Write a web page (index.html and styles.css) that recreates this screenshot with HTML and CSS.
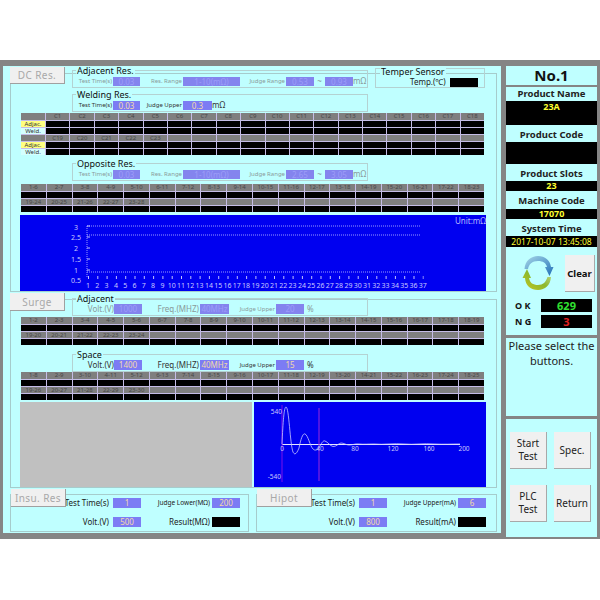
FILE: index.html
```html
<!DOCTYPE html>
<html lang="en">
<head>
<meta charset="utf-8">
<title>No.1</title>
<link rel="stylesheet" href="styles.css">
</head>
<body>
<div class="app">
  <main class="left">
    <section class="sec sec-dc">
      <button class="tab tab-dc">DC Res.</button>
      <div class="row-top">
        <div class="group off">
          <span class="gtitle">Adjacent Res.</span>
          <span class="l w35">Test Time(s)</span><span class="val w27">0.03</span>
          <span class="l w43">Res. Range</span><span class="val w57">1-10(mΩ)</span>
          <span class="l w46">Judge Range</span><span class="val w28">0.53</span>
          <span class="tilde">~</span><span class="val w28">0.93</span><span class="unit">mΩ</span>
        </div>
        <div class="group temper">
          <span class="gtitle">Temper Sensor</span>
          <span class="temp-l">Temp.(℃)</span><span class="black-box"></span>
        </div>
      </div>
      <div class="group weld">
        <span class="gtitle">Welding Res.</span>
        <span class="l w35">Test Time(s)</span><span class="val w27">0.03</span>
        <span class="l w43">Judge Upper</span><span class="val w29">0.3</span><span class="unit">mΩ</span>
      </div>
      <div class="table t-six">
        <span class="h"></span><span class="h">C1</span><span class="h">C2</span><span class="h">C3</span><span class="h">C4</span><span class="h">C5</span><span class="h">C6</span><span class="h">C7</span><span class="h">C8</span><span class="h">C9</span><span class="h">C10</span><span class="h">C11</span><span class="h">C12</span><span class="h">C13</span><span class="h">C14</span><span class="h">C15</span><span class="h">C16</span><span class="h">C17</span><span class="h">C18</span>
        <span class="adj">Adjac.</span><span class="k"></span><span class="k"></span><span class="k"></span><span class="k"></span><span class="k"></span><span class="k"></span><span class="k"></span><span class="k"></span><span class="k"></span><span class="k"></span><span class="k"></span><span class="k"></span><span class="k"></span><span class="k"></span><span class="k"></span><span class="k"></span><span class="k"></span><span class="k"></span>
        <span class="wld">Weld.</span><span class="k"></span><span class="k"></span><span class="k"></span><span class="k"></span><span class="k"></span><span class="k"></span><span class="k"></span><span class="k"></span><span class="k"></span><span class="k"></span><span class="k"></span><span class="k"></span><span class="k"></span><span class="k"></span><span class="k"></span><span class="k"></span><span class="k"></span><span class="k"></span>
        <span class="h"></span><span class="h">C19</span><span class="h">C20</span><span class="h">C21</span><span class="h">C22</span><span class="h">C23</span><span class="h"></span><span class="h"></span><span class="h"></span><span class="h"></span><span class="h"></span><span class="h"></span><span class="h"></span><span class="h"></span><span class="h"></span><span class="h"></span><span class="h"></span><span class="h"></span><span class="h"></span>
        <span class="adj">Adjac.</span><span class="k"></span><span class="k"></span><span class="k"></span><span class="k"></span><span class="k"></span><span class="k"></span><span class="k"></span><span class="k"></span><span class="k"></span><span class="k"></span><span class="k"></span><span class="k"></span><span class="k"></span><span class="k"></span><span class="k"></span><span class="k"></span><span class="k"></span><span class="k"></span>
        <span class="wld">Weld.</span><span class="k"></span><span class="k"></span><span class="k"></span><span class="k"></span><span class="k"></span><span class="k"></span><span class="k"></span><span class="k"></span><span class="k"></span><span class="k"></span><span class="k"></span><span class="k"></span><span class="k"></span><span class="k"></span><span class="k"></span><span class="k"></span><span class="k"></span><span class="k"></span>
      </div>
      <div class="group off opp">
        <span class="gtitle">Opposite Res.</span>
        <span class="l w35">Test Time(s)</span><span class="val w27">0.03</span>
        <span class="l w43">Res. Range</span><span class="val w57">1-10(mΩ)</span>
        <span class="l w46">Judge Range</span><span class="val w28">2.65</span>
        <span class="tilde">~</span><span class="val w28">3.05</span><span class="unit">mΩ</span>
      </div>
      <div class="table t-four t-opp">
        <span class="h">1-6</span><span class="h">2-7</span><span class="h">3-8</span><span class="h">4-9</span><span class="h">5-10</span><span class="h">6-11</span><span class="h">7-12</span><span class="h">8-13</span><span class="h">9-14</span><span class="h">10-15</span><span class="h">11-16</span><span class="h">12-17</span><span class="h">13-18</span><span class="h">14-19</span><span class="h">15-20</span><span class="h">16-21</span><span class="h">17-22</span><span class="h">18-23</span>
        <span class="k"></span><span class="k"></span><span class="k"></span><span class="k"></span><span class="k"></span><span class="k"></span><span class="k"></span><span class="k"></span><span class="k"></span><span class="k"></span><span class="k"></span><span class="k"></span><span class="k"></span><span class="k"></span><span class="k"></span><span class="k"></span><span class="k"></span><span class="k"></span>
        <span class="h">19-24</span><span class="h">20-25</span><span class="h">21-26</span><span class="h">22-27</span><span class="h">23-28</span><span class="h"></span><span class="h"></span><span class="h"></span><span class="h"></span><span class="h"></span><span class="h"></span><span class="h"></span><span class="h"></span><span class="h"></span><span class="h"></span><span class="h"></span><span class="h"></span><span class="h"></span>
        <span class="k"></span><span class="k"></span><span class="k"></span><span class="k"></span><span class="k"></span><span class="k"></span><span class="k"></span><span class="k"></span><span class="k"></span><span class="k"></span><span class="k"></span><span class="k"></span><span class="k"></span><span class="k"></span><span class="k"></span><span class="k"></span><span class="k"></span><span class="k"></span>
      </div>
      <div class="chart-main">
        <svg class="svg-fill" viewBox="0 0 466 76" width="466" height="76">
          <g class="grid-lines">
            <path d="M67 11H400M67 20H400M67 57H400M67 11V63"/>
          </g>
          <path class="ticks-x" d="M68 62.5H403.5"/>
          <path class="ticks-y" d="M67 11H70M67 22H70M67 33H70M67 44H70M67 55H70"/>
          <g class="ax-y">
            <text x="56" y="14.5">3</text><text x="56" y="25">2.5</text><text x="56" y="36">2</text><text x="56" y="47">1.5</text><text x="56" y="58">1</text><text x="56" y="68">0.5</text>
          </g>
          <g class="ax-x">
            <text x="68" y="73">1</text><text x="77.3" y="73">2</text><text x="86.6" y="73">3</text><text x="95.9" y="73">4</text><text x="105.2" y="73">5</text><text x="114.5" y="73">6</text><text x="123.8" y="73">7</text><text x="133.1" y="73">8</text><text x="142.4" y="73">9</text><text x="151.7" y="73">10</text><text x="161" y="73">11</text><text x="170.3" y="73">12</text><text x="179.6" y="73">13</text><text x="188.9" y="73">14</text><text x="198.2" y="73">15</text><text x="207.5" y="73">16</text><text x="216.8" y="73">17</text><text x="226.1" y="73">18</text><text x="235.4" y="73">19</text><text x="244.7" y="73">20</text><text x="254" y="73">21</text><text x="263.3" y="73">22</text><text x="272.6" y="73">23</text><text x="281.9" y="73">24</text><text x="291.2" y="73">25</text><text x="300.5" y="73">26</text><text x="309.8" y="73">27</text><text x="319.1" y="73">28</text><text x="328.4" y="73">29</text><text x="337.7" y="73">30</text><text x="347" y="73">31</text><text x="356.3" y="73">32</text><text x="365.6" y="73">33</text><text x="374.9" y="73">34</text><text x="384.2" y="73">35</text><text x="393.5" y="73">36</text><text x="402.8" y="73">37</text>
          </g>
          <text class="unit-text" x="466" y="9">Unit:mΩ</text>
        </svg>
      </div>
    </section>

    <section class="sec sec-surge">
      <button class="tab tab-surge">Surge</button>
      <div class="group off s-adj">
        <span class="gtitle">Adjacent</span>
        <span class="ml big w42">Volt.(V)</span><span class="val v2 w28">1000</span>
        <span class="ml big w57">Freq.(MHZ)</span><span class="val v2 w29f">40MHz</span>
        <span class="l w47">Judge Upper</span><span class="val v2 w28">20</span><span class="pct">%</span>
      </div>
      <div class="table t-four">
        <span class="h">1-2</span><span class="h">2-3</span><span class="h">3-4</span><span class="h">4-5</span><span class="h">5-6</span><span class="h">6-7</span><span class="h">7-8</span><span class="h">8-9</span><span class="h">9-10</span><span class="h">10-11</span><span class="h">11-12</span><span class="h">12-13</span><span class="h">13-14</span><span class="h">14-15</span><span class="h">15-16</span><span class="h">16-17</span><span class="h">17-18</span><span class="h">18-19</span>
        <span class="k"></span><span class="k"></span><span class="k"></span><span class="k"></span><span class="k"></span><span class="k"></span><span class="k"></span><span class="k"></span><span class="k"></span><span class="k"></span><span class="k"></span><span class="k"></span><span class="k"></span><span class="k"></span><span class="k"></span><span class="k"></span><span class="k"></span><span class="k"></span>
        <span class="h">19-20</span><span class="h">20-21</span><span class="h">21-22</span><span class="h">22-23</span><span class="h">23-24</span><span class="h"></span><span class="h"></span><span class="h"></span><span class="h"></span><span class="h"></span><span class="h"></span><span class="h"></span><span class="h"></span><span class="h"></span><span class="h"></span><span class="h"></span><span class="h"></span><span class="h"></span>
        <span class="k"></span><span class="k"></span><span class="k"></span><span class="k"></span><span class="k"></span><span class="k"></span><span class="k"></span><span class="k"></span><span class="k"></span><span class="k"></span><span class="k"></span><span class="k"></span><span class="k"></span><span class="k"></span><span class="k"></span><span class="k"></span><span class="k"></span><span class="k"></span>
      </div>
      <div class="group s-space">
        <span class="gtitle">Space</span>
        <span class="ml big w42">Volt.(V)</span><span class="val v2 w28">1400</span>
        <span class="ml big w57">Freq.(MHZ)</span><span class="val v2 w29f">40MHz</span>
        <span class="l w47">Judge Upper</span><span class="val v2 w28">15</span><span class="pct">%</span>
      </div>
      <div class="table t-four t-space">
        <span class="h">1-8</span><span class="h">2-9</span><span class="h">3-10</span><span class="h">4-11</span><span class="h">5-12</span><span class="h">6-13</span><span class="h">7-14</span><span class="h">8-15</span><span class="h">9-16</span><span class="h">10-17</span><span class="h">11-18</span><span class="h">12-19</span><span class="h">13-20</span><span class="h">14-21</span><span class="h">15-22</span><span class="h">16-23</span><span class="h">17-24</span><span class="h">18-25</span>
        <span class="k"></span><span class="k"></span><span class="k"></span><span class="k"></span><span class="k"></span><span class="k"></span><span class="k"></span><span class="k"></span><span class="k"></span><span class="k"></span><span class="k"></span><span class="k"></span><span class="k"></span><span class="k"></span><span class="k"></span><span class="k"></span><span class="k"></span><span class="k"></span>
        <span class="h">19-26</span><span class="h">20-27</span><span class="h">21-28</span><span class="h">22-29</span><span class="h">23-30</span><span class="h"></span><span class="h"></span><span class="h"></span><span class="h"></span><span class="h"></span><span class="h"></span><span class="h"></span><span class="h"></span><span class="h"></span><span class="h"></span><span class="h"></span><span class="h"></span><span class="h"></span>
        <span class="k"></span><span class="k"></span><span class="k"></span><span class="k"></span><span class="k"></span><span class="k"></span><span class="k"></span><span class="k"></span><span class="k"></span><span class="k"></span><span class="k"></span><span class="k"></span><span class="k"></span><span class="k"></span><span class="k"></span><span class="k"></span><span class="k"></span><span class="k"></span>
      </div>
      <div class="plots">
        <div class="plot-gray"></div>
        <div class="plot-blue">
          <svg class="svg-fill" viewBox="0 0 232 85" width="232" height="85">
            <path class="wave-axis" d="M28 42.5H206"/>
            <path class="wave-v1" d="M28 3V80"/>
            <path class="wave-v2" d="M65 6V79"/>
            <path class="wave" d="M28 42C29 20 30 5 32 5C35 5 36 42 39 50C41 54 43 51 45 46C47 36 49 31 51 32C54 33 56 44 59 47C61 49 63 48 65 46C67 42 69 38 71 39C74 40 76 44 79 44.500C82 45 85 41 87 41C90 41 92 43 95 43C99 43 101 41.500 105 42C110 42.500 114 42 120 42C130 43 140 41 150 42C160 43 170 41 180 42C190 42.500 198 42 206 42"/>
            <g class="wave-labels">
              <text x="28" y="12" class="end">540</text>
              <text x="27" y="77" class="end">-540</text>
              <text x="28" y="49">0</text><text x="66" y="49">40</text><text x="101" y="49">80</text><text x="139" y="49">120</text><text x="175" y="49">160</text><text x="210" y="49">200</text>
            </g>
          </svg>
        </div>
      </div>
    </section>

    <section class="sec-bottom">
      <div class="mini">
        <button class="tab tab-mini">Insu. Res</button>
        <span class="m-l">Test Time(s)</span><span class="val v3">1</span>
        <span class="m-l r2 small">Judge Lower(MΩ)</span><span class="val v3">200</span>
        <span class="m-l">Volt.(V)</span><span class="val v3">500</span>
        <span class="m-l r2">Result(MΩ)</span><span class="black-fill"></span>
      </div>
      <div class="mini">
        <button class="tab tab-mini">Hipot</button>
        <span class="m-l">Test Time(s)</span><span class="val v3">1</span>
        <span class="m-l r2 small">Judge Upper(mA)</span><span class="val v3">6</span>
        <span class="m-l">Volt.(V)</span><span class="val v3">800</span>
        <span class="m-l r2">Result(mA)</span><span class="black-fill"></span>
      </div>
    </section>
  </main>

  <aside class="right">
    <div class="rp rp-info">
      <h1 class="no">No.1</h1>
      <div class="rl rl-a">Product Name</div>
      <div class="rv rv-a">23A</div>
      <div class="rl rl-b">Product Code</div>
      <div class="rv rv-b"></div>
      <div class="rl rl-b">Product Slots</div>
      <div class="rv rv-c">23</div>
      <div class="rl rl-c">Machine Code</div>
      <div class="rv rv-c">17070</div>
      <div class="rl rl-b">System Time</div>
      <div class="rv rv-time">2017-10-07 13:45:08</div>
      <div class="status">
        <svg class="cycle" viewBox="0 0 32 37" width="32" height="37">
          <defs>
            <linearGradient id="gb" x1="0" y1="0" x2="1" y2="1">
              <stop offset="0" stop-color="#a8d8e8"/>
              <stop offset="1" stop-color="#1f6fb8"/>
            </linearGradient>
            <linearGradient id="gg" x1="1" y1="0" x2="0" y2="1">
              <stop offset="0" stop-color="#c8e0a0"/>
              <stop offset="0.5" stop-color="#8cb82c"/>
              <stop offset="1" stop-color="#c8c820"/>
            </linearGradient>
          </defs>
          <path fill="url(#gb)" d="M2.500 14C3 6 9 1 16 1C23 1 28 5 29 12L31.500 12L27.500 21L23 12L25 12C24 8 21 6 16 6C10 6 7 9 6 14Z"/>
          <path fill="url(#gg)" d="M29 22C28.500 30 23 35 16 35C9 35 3.500 31 3 23L.500 23L5 14L9 23L7 23C8 28 11 30 16 30C21 30 24 27 25.500 22Z"/>
        </svg>
        <button class="clear">Clear</button>
      </div>
      <div class="count"><span class="c-l">O K</span><span class="c-v green">629</span></div>
      <div class="count"><span class="c-l">N G</span><span class="c-v red">3</span></div>
    </div>
    <div class="rp rp-msg">Please select the buttons.</div>
    <div class="rp rp-btn">
      <button class="act">Start Test</button>
      <button class="act">Spec.</button>
      <button class="act">PLC Test</button>
      <button class="act">Return</button>
    </div>
  </aside>
</div>
</body>
</html>
```
FILE: styles.css
```css
* { box-sizing: border-box; }
html, body { margin: 0; padding: 0; background: #fff; }
body { font-family: "Noto Sans", "Open Sans", sans-serif; color: #222; }
button { font-family: inherit; margin: 0; padding: 0; }

.app {
  margin-top: 60px;
  width: 600px;
  height: 479px;
  background: #858585;
  padding: 6px 3px 0;
  display: flex;
  gap: 5px;
  align-items: flex-start;
}

.left { width: 498px; height: 467px; background: #bfffff; display: flex; flex-direction: column; }

.sec { position: relative; padding-left: 18px; }
.sec::before {
  content: "";
  position: absolute;
  top: 7px; left: 7px; right: 4px; bottom: 0;
  border: 1px solid #a6cccc;
  pointer-events: none;
}
.sec-dc { height: 226px; padding-top: 4px; }
.sec-surge { height: 196px; padding-top: 6px; }

.tab {
  position: absolute;
  z-index: 2;
  width: 55px;
  height: 18px;
  background: #f0f0f0;
  border: 0;
  border-right: 1px solid #a0a0a0;
  border-bottom: 1px solid #a0a0a0;
  color: #a8a8a8;
  font-size: 10px;
  letter-spacing: .4px;
  line-height: 16px;
}
.tab-dc { top: 1px; left: 7px; height: 17px; }
.tab-surge { top: 1px; left: 7px; }
.tab-mini { top: -6px; left: 0; }

.group {
  position: relative;
  z-index: 1;
  display: flex;
  align-items: center;
  width: 296px;
  height: 18px;
  margin-left: 51px;
  padding: 4px 0 0 5px;
  border: 1px solid #b4d2d2;
  font-size: 6px;
  line-height: 8px;
  color: #333;
}
.group.off { color: #8a9a9a; }
.gtitle {
  position: absolute;
  left: 3px;
  top: -5px;
  padding: 0 1px;
  background: #bfffff;
  color: #111;
  font-size: 9px;
  line-height: 9px;
  white-space: nowrap;
}
.row-top { display: flex; align-items: flex-start; }
.temper { width: 110px; height: 20px; margin: -2px 0 0 7px; padding: 8px 0 0 34px; }
.temper .gtitle { left: 4px; top: -2px; }
.temp-l { width: 33px; font-size: 8px; color: #222; white-space: nowrap; }
.black-box { width: 28px; height: 9px; margin-left: 7px; background: #000; }
.weld { margin-top: 6px; }
.opp { margin-top: 8px; }
.s-adj { padding: 3px 0 0; }
.s-space { margin-top: 9px; padding: 3px 0 0; }

.l { text-align: right; white-space: nowrap; padding-right: 1px; }
.ml { text-align: right; white-space: nowrap; }
.big { font-size: 8px; }
.w35 { width: 35px; }
.w43 { width: 43px; }
.w46 { width: 46px; }
.w47 { width: 47px; }
.w42 { width: 41px; }
.w57 { width: 57px; }
.w27 { width: 27px; }
.w28 { width: 28px; }
.w29 { width: 29px; }
.w29f { width: 29px; margin-left: 1px; }
.val {
  display: block;
  height: 9px;
  background: #7c7cf4;
  color: #f2d9a8;
  font-size: 8px;
  line-height: 9px;
  text-align: center;
  white-space: nowrap;
  overflow: hidden;
}
.off .val { color: #9c9cf8; background: #8484ee; }
.v2 { height: 10px; line-height: 10px; }
.tilde { width: 11px; text-align: center; font-size: 8px; }
.unit { font-size: 8px; padding-left: 0; white-space: nowrap; }
.pct { font-size: 8px; padding-left: 3px; }

.table {
  display: grid;
  width: 463px;
  gap: 1px;
  background: #c4bce6;
  font-size: 6px;
  color: #484848;
  text-align: center;
}
.t-six {
  margin-top: 1px;
  grid-template-columns: 24px repeat(18, 1fr);
  grid-template-rows: 7px repeat(5, 6px);
}
.t-four {
  margin-top: 1px;
  grid-template-columns: repeat(18, 1fr);
  grid-template-rows: 7px 6px 6px 6px;
}
.t-opp { margin-top: 3px; }
.t-space { margin-top: 0; }
.h { background: #7f7f7f; line-height: 6px; white-space: nowrap; }
.k { background: #000; }
.adj, .wld { font-size: 6px; line-height: 6px; color: #333; }
.adj { background: #ffff80; }
.wld { background: #d4ffff; }

.chart-main {
  width: 466px;
  height: 76px;
  margin: 3px 0 0 -1px;
  background: #0000f0;
}
.svg-fill { display: block; }
.grid-lines path { fill: none; stroke: #9a9aff; stroke-width: 1; stroke-dasharray: 1 1; }
.ticks-x { fill: none; stroke: #c0c0ff; stroke-width: 3; stroke-dasharray: 1 8.3; }
.ticks-y { fill: none; stroke: #c0c0ff; stroke-width: 1; }
.ax-y text { font-size: 7px; fill: #c8c8ff; text-anchor: middle; font-family: "Noto Sans", sans-serif; }
.ax-x text { font-size: 7px; fill: #c8c8ff; text-anchor: middle; font-family: "Noto Sans", sans-serif; }
.unit-text { font-size: 8px; fill: #b8b8ff; text-anchor: end; font-family: "Noto Sans", sans-serif; }

.plots { display: flex; gap: 2px; margin: 2px 0 0 -1px; height: 85px; width: 466px; }
.plot-gray { width: 232px; background: #c0c0c0; }
.plot-blue { width: 232px; background: #0000f0; }
.wave-axis { fill: none; stroke: #e8e8ff; stroke-width: 1; }
.wave-v1 { fill: none; stroke: #7a10e8; stroke-width: 1; }
.wave-v2 { fill: none; stroke: #9a28d8; stroke-width: 1; }
.wave { fill: none; stroke: #c8c8ff; stroke-width: .8; }
.wave-labels text { font-size: 6.500px; fill: #c8c8ff; text-anchor: middle; font-family: "Noto Sans", sans-serif; }
.wave-labels text.end { text-anchor: end; }

.sec-bottom { height: 45px; display: flex; gap: 7px; padding: 6px 0 0 7px; }
.mini {
  position: relative;
  display: grid;
  grid-template-columns: 102px 28px 71px 28px;
  grid-template-rows: 10px 10px;
  row-gap: 9px;
  align-items: center;
  height: 38px;
  padding-top: 3px;
  border: 1px solid #a6cccc;
  font-size: 8px;
  line-height: 10px;
  color: #222;
}
.mini:first-child { width: 239px; }
.mini:last-child { width: 241px; }
.m-l { text-align: right; padding-right: 4px; white-space: nowrap; }
.m-l.r2 { padding-right: 2px; }
.m-l.small { font-size: 6.500px; }
.v3 { height: 10px; line-height: 10px; }
.black-fill { height: 10px; background: #000; }

.right { width: 91px; display: flex; flex-direction: column; gap: 3px; }
.rp { background: #bfffff; }
.rp-info { height: 269px; display: flex; flex-direction: column; align-items: stretch; }
.no {
  margin: 0 0 2px;
  height: 19px;
  font-size: 15px;
  line-height: 19px;
  font-weight: 700;
  text-align: center;
  color: #111;
  box-shadow: 0 2px 0 #858585;
}
.rl { font-size: 9.500px; font-weight: 700; text-align: center; color: #222; white-space: nowrap; }
.rl-a { height: 14px; line-height: 14px; }
.rl-b { height: 17px; line-height: 19px; }
.rl-c { height: 18px; line-height: 19px; }
.rv { background: #000; color: #ffff30; font-size: 9px; font-weight: 700; text-align: center; line-height: 11px; }
.rv-a { height: 24px; }
.rv-b { height: 22px; }
.rv-c { height: 10px; line-height: 10px; }
.rv-time { height: 11px; font-weight: 400; font-size: 8.500px; white-space: nowrap; }
.status { display: flex; align-items: flex-start; margin: 8px 0 0 16px; gap: 11px; }
.cycle { display: block; }
.clear {
  width: 30px;
  height: 37px;
  background: #f0f0f0;
  border: 0;
  border-right: 1px solid #a8a8a8;
  border-bottom: 1px solid #a8a8a8;
  font-size: 9.500px;
  font-weight: 700;
  color: #111;
}
.count { display: flex; align-items: center; height: 13px; margin-top: 3px; padding-left: 9px; }
.status + .count { margin-top: 7px; }
.c-l { width: 26px; font-size: 9px; font-weight: 700; color: #111; white-space: nowrap; }
.c-v { width: 51px; height: 13px; background: #000; font-size: 11px; line-height: 13px; font-weight: 700; text-align: center; }
.green { color: #30e030; }
.red { color: #e02020; }

.rp-msg { height: 78px; font-size: 11px; line-height: 15px; text-align: center; color: #222; }
.rp-btn {
  height: 118px;
  display: grid;
  grid-template-columns: 37px 37px;
  grid-template-rows: 37px 37px;
  gap: 16px 7px;
  padding: 13px 0 0 4px;
}
.act {
  background: #f0f0f0;
  border: 0;
  border-right: 1px solid #a8a8a8;
  border-bottom: 1px solid #a8a8a8;
  font-size: 10px;
  line-height: 13px;
  color: #222;
}
```
